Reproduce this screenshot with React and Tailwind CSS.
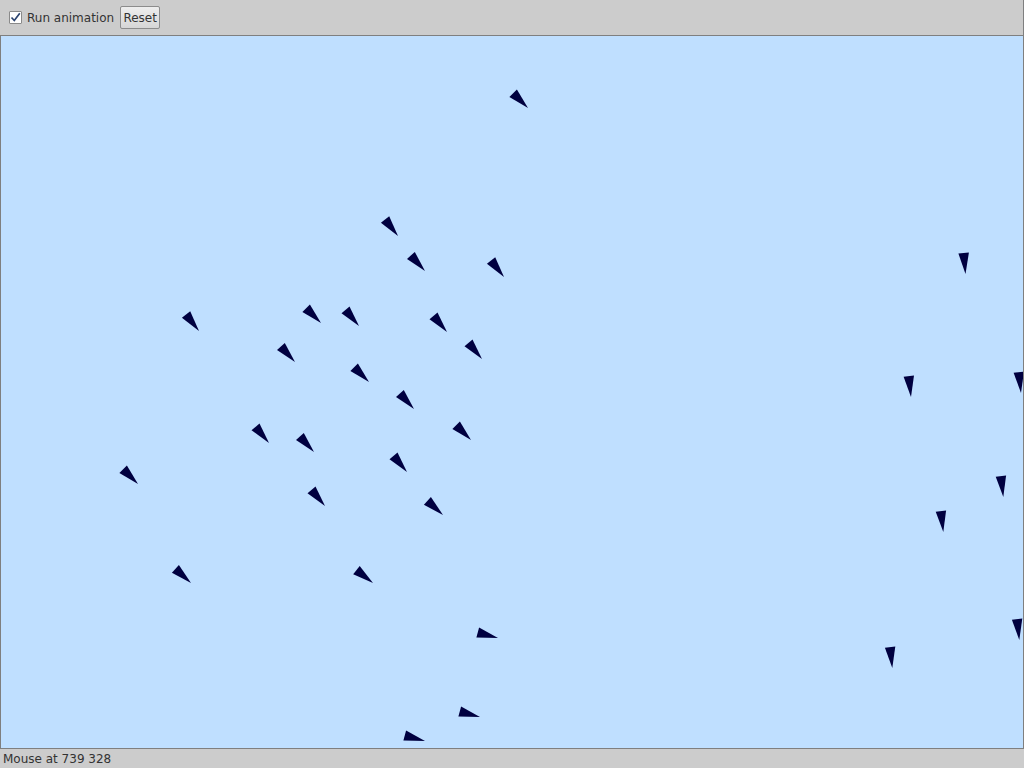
import React from 'react'

// canvas origin on the page is (1, 36); boids are listed in page coords
const OX = 1
const OY = 36

// [tipX, tipY, headingDeg]
const boids = [
    [528, 108, 45],
    [398, 236, 52],
    [425, 271, 48],
    [504, 277, 52],
    [199, 331, 52],
    [321, 323, 45],
    [359, 326, 50],
    [447, 332, 50],
    [295, 362, 48],
    [482, 359, 50],
    [369, 382, 45],
    [414, 409, 48],
    [269, 443, 50],
    [471, 440, 45],
    [314, 452, 48],
    [407, 472, 50],
    [138, 484, 45],
    [325, 506, 50],
    [443, 515, 42],
    [191, 583, 42],
    [373, 583, 38],
    [498, 638, 15],
    [480, 717, 15],
    [425, 741, 15],
    [965.5, 274, 85],
    [911, 397, 84],
    [1021, 393, 84],
    [1003.3, 497, 83.5],
    [943.3, 532, 83.5],
    [1019.3, 640, 84],
    [892.3, 668, 84],
]

function boidPoints([tx, ty, deg]) {
    const L = 21
    const W = 10.5
    const a = (deg * Math.PI) / 180
    const c = Math.cos(a)
    const s = Math.sin(a)
    const mx = tx - L * c
    const my = ty - L * s
    const hx = (-s * W) / 2
    const hy = (c * W) / 2
    const pts = [
        [tx, ty],
        [mx + hx, my + hy],
        [mx - hx, my - hy],
    ]
    return pts.map(([x, y]) => `${(x - OX).toFixed(1)},${(y - OY).toFixed(1)}`).join(' ')
}

function Toolbar() {
    return (
        <div className="h-[35px] bg-[#cccccc] flex items-center pl-[9px] border-r border-[#7f7f7f]">
            <label className="flex items-center">
                <span className="w-[13px] h-[13px] bg-white border border-[#8a8a8a] rounded-[1px] flex items-center justify-center">
                    <svg width="11" height="11" viewBox="0 0 11 11">
                        <path d="M1.5 5.5 L4.3 8.5 L9.8 1.2" fill="none" stroke="#2c4470" strokeWidth="1.7" />
                    </svg>
                </span>
                <span className="ml-[5px] text-[12px] text-[#333333] leading-none">Run animation</span>
            </label>
            <button className="ml-[6px] h-[23px] w-[40px] border border-[#8c8c8c] rounded-[2px] bg-gradient-to-b from-[#eeeeee] to-[#d6d6d6] text-[12px] text-[#333333] leading-none">
                Reset
            </button>
        </div>
    )
}

function Canvas() {
    return (
        <div className="h-[714px] border border-[#7f7f7f] bg-[#bfdfff] overflow-hidden">
            <svg width="1022" height="712" className="block">
                {boids.map((b, i) => (
                    <polygon key={i} points={boidPoints(b)} fill="#000040" />
                ))}
            </svg>
        </div>
    )
}

export default function App() {
    return (
        <div className="w-[1024px] h-[768px] bg-[#cccccc] flex flex-col overflow-hidden" style={{ fontFamily: '"DejaVu Sans", sans-serif' }}>
            <Toolbar />
            <Canvas />
            <div className="flex-1 flex items-center pl-[3px] text-[12px] text-[#333333] leading-none">
                Mouse at 739 328
            </div>
        </div>
    )
}
